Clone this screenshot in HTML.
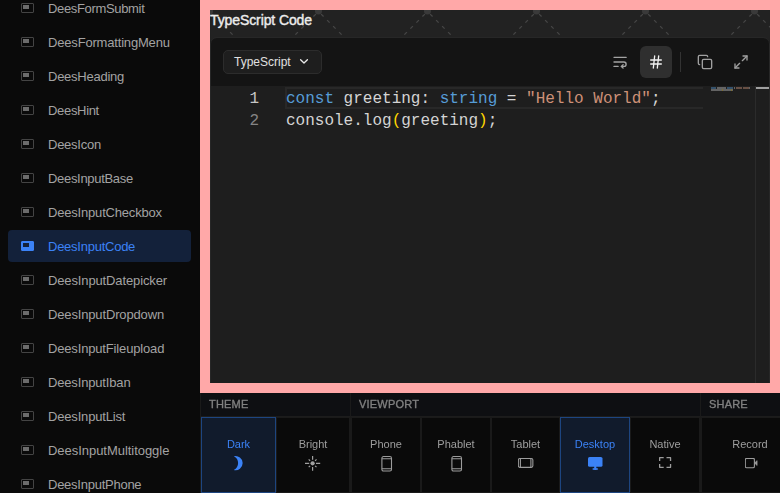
<!DOCTYPE html>
<html><head><meta charset="utf-8">
<style>
*{margin:0;padding:0;box-sizing:border-box}
html,body{width:780px;height:493px;overflow:hidden;background:#0a0a0a;font-family:"Liberation Sans",sans-serif}
#side{position:absolute;left:0;top:0;width:200px;height:493px;background:#0a0a0a;overflow:hidden}
.it{position:absolute;left:8px;width:183px;height:32px;border-radius:4px}
.it .ic{position:absolute;left:13px;top:11px;width:13px;height:10px;border:1px solid #444;border-radius:1px}
.it .ic:after{content:"";position:absolute;left:1px;top:1px;width:6px;height:4px;background:#6c6c6c}
.it .tx{position:absolute;left:40px;top:1px;line-height:32px;font-size:13px;letter-spacing:-0.25px;color:#a3a3a3;white-space:nowrap}
.it.on{background:#13213a}
.it.on .ic{background:#3b82f6;border-color:#3b82f6;border-radius:1px}
.it.on .ic:after{background:#13213a;left:1px;top:1px;width:6px;height:4px}
.it.on .tx{color:#3b82f6}
#frame{position:absolute;left:200px;top:0;width:580px;height:393px;background:#ffa8a8}
#inner{position:absolute;left:210px;top:10px;width:560px;height:373px;background:#222;overflow:hidden}
#pat{position:absolute;left:0;top:0}
#title{position:absolute;left:0;top:0;font-size:14px;font-weight:normal;-webkit-text-stroke:0.4px #ececec;letter-spacing:-0.1px;color:#ececec;line-height:20px;white-space:nowrap}
#card{position:absolute;left:0;top:28px;width:560px;height:400px;background:#1e1e1e;border-radius:7px 7px 0 0}
#hdr{position:absolute;left:0;top:0;width:560px;height:48px;background:#141414;border-radius:7px 7px 0 0}
#dd{position:absolute;left:13px;top:12px;width:99px;height:24px;border:1px solid #2c2c2c;background:#1e1e1e;border-radius:5px}
#dd span{position:absolute;left:10px;top:0;line-height:22px;font-size:12px;color:#e0e0e0}
#dd svg{position:absolute;left:75px;top:7px}
#hdr svg.i{position:absolute}
#hashbg{position:absolute;left:430px;top:8px;width:32px;height:32px;border-radius:6px;background:#2f2f2f}
#sep{position:absolute;left:470px;top:14px;width:1px;height:20px;background:#333}
.code{position:absolute;font-family:"Liberation Mono",monospace;font-size:16px;line-height:22px;white-space:pre;color:#d4d4d4}
#lh{position:absolute;left:75px;top:49px;width:418px;height:22px;border:2px solid #282828;border-right:none}
#mm{position:absolute;left:501px;top:49px;width:40px;height:4px}
#vs{position:absolute;left:545px;top:48px;width:1px;height:330px;background:#2b2b2b}
#cb{position:absolute;left:0;top:-1px;width:560px;height:401px;border:1px solid #272727;border-radius:7px 7px 0 0}
#ruler{position:absolute;left:546px;top:49px;width:13px;height:2px;background:#a0a0a0}
#bar{position:absolute;left:200px;top:393px;width:580px;height:100px;background:#0a0a0a;will-change:transform}
.sh{position:absolute;top:0;height:24px;background:#0e0f12;border-bottom:1px solid #1c1c1c}
.hl{position:absolute;top:-1px;line-height:24px;font-size:11px;font-weight:normal;-webkit-text-stroke:0.35px #808080;letter-spacing:0.2px;color:#808080}
.vl{position:absolute;top:0;height:100px;width:1px;background:#1a1a1a}
.btn{position:absolute;top:24px;height:76px;border:1px solid #1a1a1a}
.btn .l{position:absolute;left:0;width:100%;top:19px;text-align:center;font-size:11px;color:#9e9e9e;line-height:14px;white-space:nowrap}
.btn.on{background:#111b2c;border:1px solid #1d4580}
.btn.on .l{color:#3b82f6}
.btn svg{position:absolute}
</style></head><body>
<div id="side">
<div class="it" style="top:-8px"><div class="ic"></div><div class="tx" style="letter-spacing:-0.335px">DeesFormSubmit</div></div>
<div class="it" style="top:26px"><div class="ic"></div><div class="tx" style="letter-spacing:-0.180px">DeesFormattingMenu</div></div>
<div class="it" style="top:60px"><div class="ic"></div><div class="tx">DeesHeading</div></div>
<div class="it" style="top:94px"><div class="ic"></div><div class="tx" style="letter-spacing:-0.320px">DeesHint</div></div>
<div class="it" style="top:128px"><div class="ic"></div><div class="tx">DeesIcon</div></div>
<div class="it" style="top:162px"><div class="ic"></div><div class="tx" style="letter-spacing:-0.310px">DeesInputBase</div></div>
<div class="it" style="top:196px"><div class="ic"></div><div class="tx" style="letter-spacing:-0.190px">DeesInputCheckbox</div></div>
<div class="it on" style="top:230px"><div class="ic"></div><div class="tx">DeesInputCode</div></div>
<div class="it" style="top:264px"><div class="ic"></div><div class="tx" style="letter-spacing:-0.130px">DeesInputDatepicker</div></div>
<div class="it" style="top:298px"><div class="ic"></div><div class="tx" style="letter-spacing:-0.150px">DeesInputDropdown</div></div>
<div class="it" style="top:332px"><div class="ic"></div><div class="tx" style="letter-spacing:-0.160px">DeesInputFileupload</div></div>
<div class="it" style="top:366px"><div class="ic"></div><div class="tx" style="letter-spacing:-0.160px">DeesInputIban</div></div>
<div class="it" style="top:400px"><div class="ic"></div><div class="tx" style="letter-spacing:-0.170px">DeesInputList</div></div>
<div class="it" style="top:434px"><div class="ic"></div><div class="tx" style="letter-spacing:-0.040px">DeesInputMultitoggle</div></div>
<div class="it" style="top:468px"><div class="ic"></div><div class="tx">DeesInputPhone</div></div>
</div>
<div id="frame"></div>
<div id="inner">
<svg id="pat" width="560" height="30" viewBox="0 0 560 30"><g fill="#3a3a3a"><circle cx="-0.5" cy="1" r="3.5"/><circle cx="108.5" cy="1" r="3.5"/><circle cx="217.5" cy="1" r="3.5"/><circle cx="326.5" cy="1" r="3.5"/><circle cx="435.5" cy="1" r="3.5"/><circle cx="544.5" cy="1" r="3.5"/></g><g stroke="#464646" stroke-width="1.3" stroke-dasharray="3.5 5" fill="none"><path d="M-3.1 4.1 L-32.5 33.5 M2.1 4.1 L31.5 33.5"/><path d="M105.9 4.1 L76.5 33.5 M111.1 4.1 L140.5 33.5"/><path d="M214.9 4.1 L185.5 33.5 M220.1 4.1 L249.5 33.5"/><path d="M323.9 4.1 L294.5 33.5 M329.1 4.1 L358.5 33.5"/><path d="M432.9 4.1 L403.5 33.5 M438.1 4.1 L467.5 33.5"/><path d="M541.9 4.1 L512.5 33.5 M547.1 4.1 L576.5 33.5"/></g></svg>
<div id="title">TypeScript Code</div>
<div id="card">
 <div id="hdr">
  <div id="dd"><span>TypeScript</span><svg width="10" height="7" viewBox="0 0 10 7"><path d="M1.6 1.8 L5 5.1 L8.4 1.8" stroke="#e8e8e8" stroke-width="1.35" stroke-linecap="round" stroke-linejoin="round" fill="none"/></svg></div>
  <svg class="i" style="left:399px;top:14px" width="22" height="20" viewBox="0 0 22 20" fill="none" stroke="#a3a3a3" stroke-width="1.35" stroke-linecap="round" stroke-linejoin="round"><path d="M5 5.3H17.2"/><path d="M5 10H14.9A2.2 2.2 0 0 1 14.9 14.4H12.4"/><path d="M5 14.4H9.1"/><polyline points="14.1 12.7 12.4 14.4 14.1 16.1"/></svg>
  <div id="hashbg"></div>
  <svg class="i" style="left:438px;top:16px" width="16" height="16" viewBox="0 0 24 24" fill="none" stroke="#f2f2f2" stroke-width="2" stroke-linecap="round" stroke-linejoin="round"><line x1="4" x2="20" y1="9" y2="9"/><line x1="4" x2="20" y1="15" y2="15"/><line x1="10" x2="8" y1="3" y2="21"/><line x1="16" x2="14" y1="3" y2="21"/></svg>
  <div id="sep"></div>
  <svg class="i" style="left:487px;top:16px" width="16" height="16" viewBox="0 0 24 24" fill="none" stroke="#a0a0a0" stroke-width="2" stroke-linecap="round" stroke-linejoin="round"><rect width="14" height="14" x="8" y="8" rx="2" ry="2"/><path d="M4 16c-1.1 0-2-.9-2-2V4c0-1.1.9-2 2-2h10c1.1 0 2 .9 2 2"/></svg>
  <svg class="i" style="left:523px;top:16px" width="16" height="16" viewBox="0 0 24 24" fill="none" stroke="#a0a0a0" stroke-width="2" stroke-linecap="round" stroke-linejoin="round"><path d="M15 3h6v6"/><path d="m21 3-7 7"/><path d="m3 21 7-7"/><path d="M9 21H3v-6"/></svg>
 </div>
 <div id="lh"></div>
 <div class="code" style="left:0;width:49px;text-align:right;top:50px;color:#c6c6c6">1</div>
 <div class="code" style="left:0;width:49px;text-align:right;top:72px;color:#858585">2</div>
 <div class="code" style="left:76px;top:50px"><span style="color:#569cd6">const</span> greeting: <span style="color:#569cd6">string</span> = <span style="color:#ce9178">"Hello World"</span>;</div>
 <div class="code" style="left:76px;top:72px">console.log<span style="color:#ffd700">(</span>greeting<span style="color:#ffd700">)</span>;</div>
 <svg id="mm" width="40" height="4" viewBox="0 0 40 4"><g opacity="0.5"><rect x="0" y="0" width="5" height="2" fill="#4a84b8"/><rect x="6" y="0" width="9" height="2" fill="#a8a8a8"/><rect x="16" y="0" width="6" height="2" fill="#4a84b8"/><rect x="23" y="0" width="1" height="2" fill="#a8a8a8"/><rect x="25" y="0" width="6" height="2" fill="#b0806a"/><rect x="32" y="0" width="6" height="2" fill="#b0806a"/><rect x="38" y="0" width="1" height="2" fill="#a8a8a8"/><rect x="0" y="2" width="11" height="2" fill="#a8a8a8"/><rect x="11" y="2" width="1" height="2" fill="#e0c040"/><rect x="12" y="2" width="8" height="2" fill="#a8a8a8"/><rect x="20" y="2" width="1" height="2" fill="#e0c040"/><rect x="21" y="2" width="1" height="2" fill="#a8a8a8"/></g></svg>
 <div id="vs"></div>
 <div id="ruler"></div>
 <div id="cb"></div>
</div>
</div>
<div id="bar">
 <div class="sh" style="left:0;width:580px"></div>
 <div class="hl" style="left:9px">THEME</div>
 <div class="hl" style="left:159px">VIEWPORT</div>
 <div class="hl" style="left:509px">SHARE</div>
 <div class="vl" style="left:0"></div>
 <div class="vl" style="left:150px"></div>
 <div class="vl" style="left:500px"></div>
 <div class="btn on" style="left:1px;width:75px"><div class="l">Dark</div>
  <svg style="left:24px;top:34px" width="24" height="22" viewBox="0 0 24 22"><path d="M7.8 4.2 A7.08 7.08 0 1 1 7.8 17.9 A7.6 7.6 0 0 0 7.8 4.2Z" fill="#3b82f6"/></svg>
 </div>
 <div class="btn" style="left:76px;width:74px"><div class="l">Bright</div>
  <svg style="left:27px;top:37px" width="19" height="19" viewBox="0 0 19 19" stroke="#a0a0a0" stroke-width="1.2" fill="none"><circle cx="8.6" cy="8.3" r="2.1" fill="#a0a0a0" stroke="none"/><path d="M8.60 1.00L8.60 4.80M8.60 11.90L8.60 15.80M1.00 8.30L5.20 8.30M12.00 8.30L16.20 8.30M4.70 4.40L6.10 5.80M12.50 4.40L11.10 5.80M4.70 12.20L6.10 10.80M12.50 12.20L11.10 10.80"/></svg>
 </div>
 <div class="btn" style="left:151px;width:70px"><div class="l">Phone</div>
  <svg style="left:29px;top:38px" width="12" height="17" viewBox="0 0 12 17" stroke="#9c9c9c" stroke-width="1.1" fill="none"><rect x="0.9" y="0.55" width="9.6" height="14.45" rx="1.6"/><path d="M0.9 2.8h9.6M0.9 12.8h9.6"/></svg>
 </div>
 <div class="btn" style="left:221px;width:70px"><div class="l">Phablet</div>
  <svg style="left:29px;top:38px" width="12" height="17" viewBox="0 0 12 17" stroke="#9c9c9c" stroke-width="1.1" fill="none"><rect x="0.9" y="0.55" width="9.6" height="14.45" rx="1.6"/><path d="M0.9 2.8h9.6M0.9 12.8h9.6"/></svg>
 </div>
 <div class="btn" style="left:291px;width:69px"><div class="l">Tablet</div>
  <svg style="left:26px;top:40px" width="17" height="12" viewBox="0 0 17 12" stroke="#9c9c9c" stroke-width="1.1" fill="none"><rect x="0.35" y="0.55" width="14.5" height="8.8" rx="1.5"/><path d="M2.4 0.6v8.7M12.9 0.6v8.7"/></svg>
 </div>
 <div class="btn on" style="left:360px;width:70px"><div class="l">Desktop</div>
  <svg style="left:27px;top:39px" width="16" height="14" viewBox="0 0 16 14" fill="#3b82f6"><rect x="0" y="0" width="14.5" height="9.8" rx="1.6"/><rect x="6.2" y="9" width="2.1" height="2.5"/><ellipse cx="7.25" cy="11.9" rx="3" ry="1"/></svg>
 </div>
 <div class="btn" style="left:430px;width:70px"><div class="l">Native</div>
  <svg style="left:28px;top:39px" width="14" height="12" viewBox="0 0 14 12" stroke="#9c9c9c" stroke-width="1.3" fill="none" stroke-linejoin="round"><path d="M0.65 4.1V0.65H4.7M7.5 0.65H11.55V4.1M11.55 7V10.35H7.5M4.7 10.35H0.65V7"/></svg>
 </div>
 <div class="btn" style="left:501px;width:98px"><div class="l">Record</div>
  <svg style="left:43px;top:40px" width="14" height="11" viewBox="0 0 14 11" stroke="#9c9c9c" stroke-width="1.1" fill="none"><rect x="0.3" y="0.35" width="9.1" height="9.4" rx="1.3"/><path d="M9.5 5.05L12.1 2.6V7.5Z" fill="#9c9c9c" stroke-width="0.6"/></svg>
 </div>
</div>
</body></html>
